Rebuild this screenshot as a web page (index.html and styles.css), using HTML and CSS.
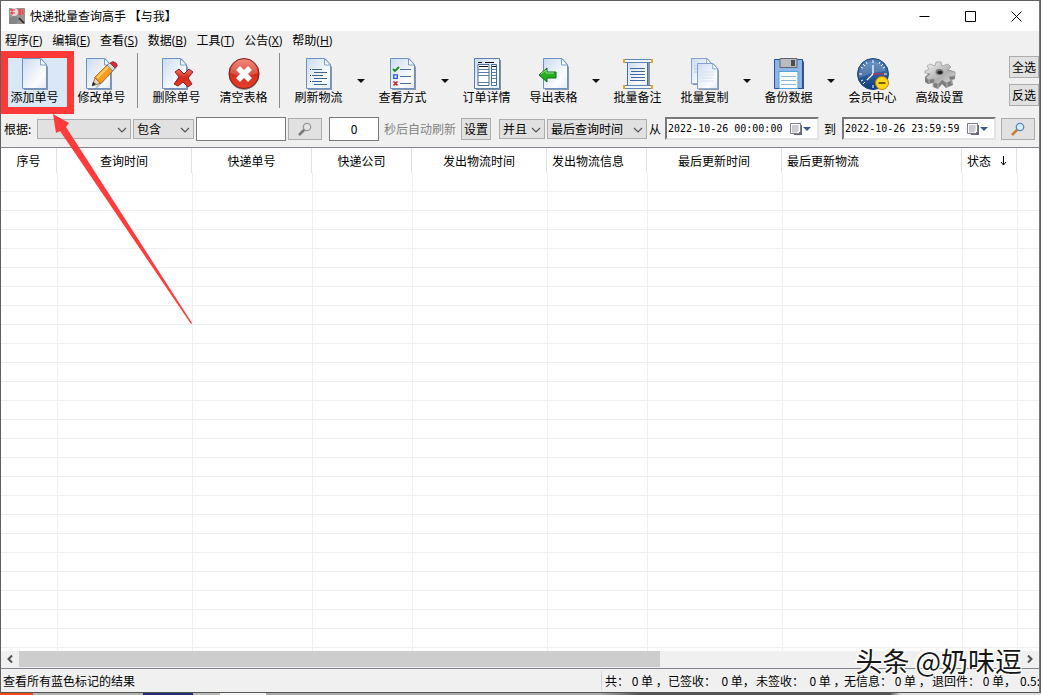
FILE: index.html
```html
<!DOCTYPE html>
<html lang="zh-CN">
<head>
<meta charset="utf-8">
<title>快递批量查询高手</title>
<link rel="stylesheet" href="styles.css">
</head>
<body>
<svg class="defs" aria-hidden="true">
  <defs>
    <linearGradient id="paper" x1="0" y1="0" x2="1" y2="1"><stop offset="0" stop-color="#cbdaf0"/><stop offset=".7" stop-color="#fbfdff"/><stop offset="1" stop-color="#e2eaf6"/></linearGradient>
    <linearGradient id="red" x1="0" y1="0" x2="0" y2="1"><stop offset="0" stop-color="#f0705a"/><stop offset=".5" stop-color="#d42a1c"/><stop offset="1" stop-color="#e8402c"/></linearGradient>
    <linearGradient id="blue" x1="0" y1="0" x2="0" y2="1"><stop offset="0" stop-color="#4f7fba"/><stop offset="1" stop-color="#0d3c7c"/></linearGradient>
    <linearGradient id="metal" x1="0" y1="0" x2="1" y2="1"><stop offset="0" stop-color="#f4f4f4"/><stop offset=".6" stop-color="#b0b0b0"/><stop offset="1" stop-color="#dcdcdc"/></linearGradient>
    <symbol id="page" viewBox="0 0 26 32"><path d="M3 2h17l6 7v23H2z" fill="#8b95a5"/><path d="M.5.5h18.500l5.500 6V30.500H.5z" fill="url(#paper)" stroke="#6d91c4"/><path d="M18.500.500v6.500h6z" fill="#f8fbff" stroke="#7e9cc8"/></symbol>
    <symbol id="chev" viewBox="0 0 10 6"><path d="M1 1l4 4 4-4" fill="none" stroke="#555" stroke-width="1.200"/></symbol>
    <symbol id="calendar" viewBox="0 0 22 12"><path d="M2 2h10v10H4z" fill="#667"/><path d="M.5.5h10v8l-2 2h-8z" fill="#fff" stroke="#7d7d88"/><path d="M2 3h7M2 5h7M2 7h7M2 9h5M3 2v7M5 2v7M7 2v7" stroke="#a6a6b4" stroke-width=".7"/><path d="M13 4h8l-4 4z" fill="#375985"/></symbol>
  </defs>
</svg>

<div class="window">
  <header class="titlebar">
    <svg class="app-icon" viewBox="0 0 16 16" aria-hidden="true"><path d="M0 0h16v16H0z" fill="#9a9292"/><circle cx="5" cy="4" r="4" fill="#e9dada"/><path d="M9 1h6v6H9z" fill="#d9b9b9"/><path d="M1 2h5M3 1v6M1 5h5M9 2h5M9 4h5M11 1v6M14 1v5M9 6h6" stroke="#e02a30"/><path d="M0 10l6-2 5 4-5 4H0z" fill="#858585"/><path d="M10 10l5 5" stroke="#222" stroke-width="1.500"/></svg>
    <h1 class="title">快递批量查询高手 【与我】</h1>
    <div class="window-buttons">
      <button class="win-btn" aria-label="最小化"><svg viewBox="0 0 11 11"><path d="M.5 5.500h10"/></svg></button>
      <button class="win-btn" aria-label="最大化"><svg viewBox="0 0 11 11"><path d="M.5.5h10v10H.5z"/></svg></button>
      <button class="win-btn" aria-label="关闭"><svg viewBox="0 0 11 11"><path d="M.5.5l10 10M10.500.5l-10 10"/></svg></button>
    </div>
  </header>

  <nav class="menu">
    <button>程序(<u>F</u>)</button><button>编辑(<u>E</u>)</button><button>查看(<u>S</u>)</button><button>数据(<u>B</u>)</button><button>工具(<u>T</u>)</button><button>公告(<u>X</u>)</button><button>帮助(<u>H</u>)</button>
  </nav>

  <div class="toolbar">
    <button class="tool tool-active"><svg viewBox="0 0 32 32"><use href="#page" x="3" width="26" height="32"/></svg>添加单号</button>
    <button class="tool"><svg viewBox="0 0 32 32"><use href="#page" width="26" height="32"/><path d="M10 30l16-17 4-4" stroke="#808790" stroke-width="2" opacity=".5"/><path d="M6 28l3-8 6 5z" fill="#f0d2a4" stroke="#74502c" stroke-width=".7"/><path d="M6 28l1-4 3 2z" fill="#222"/><path d="M8.500 19.500L21 7l6 5.500-12 13z" fill="#f59d25" stroke="#985415" stroke-width=".7"/><path d="M11 20L23 8" stroke="#ffd35b" stroke-width="2"/><path d="M21 7l3-2 5 5-2.500 3z" fill="#d5d8df" stroke="#686c78" stroke-width=".7"/><path d="M24 5q3-3 6 0 3 3-1 5z" fill="#d82a35" stroke="#8d2730" stroke-width=".7"/></svg>修改单号</button>
    <span class="divider"></span>
    <button class="tool"><svg viewBox="0 0 32 32"><use href="#page" x="1" width="26" height="32"/><path d="M14 14l4-3 5 5 5-5 4 3-5 6 4 6-4 3-5-5-5 4-4-2 5-7z" fill="url(#red)" stroke="#941a20" stroke-width="1"/></svg>删除单号</button>
    <button class="tool"><svg viewBox="0 0 32 32"><circle cx="16" cy="16.500" r="15.200" fill="#777"/><circle cx="16" cy="15.500" r="15" fill="url(#red)" stroke="#7e211d"/><path d="M2.500 15a13.500 13.500 0 0127 0q-14 6-27 0z" fill="#fff" opacity=".2"/><path d="M10 10l12 12M22 10L10 22" stroke="#fff" stroke-width="5.500"/></svg>清空表格</button>
    <span class="divider"></span>
    <button class="tool"><svg viewBox="0 0 32 32"><use href="#page" x="3" width="26" height="32"/><path d="M9 11.500h10M11 14.500h13M9 17.500h11M11 20.500h13M9 23.500h10M11 26.500h13" stroke="#3f6594"/><path d="M7 11.500h1M7 17.500h1M7 23.500h1" stroke="#222"/></svg>刷新物流</button>
    <button class="drop" aria-label="刷新物流选项"><svg viewBox="0 0 8 4"><path d="M0 0h8L4 4z"/></svg></button>
    <button class="tool"><svg viewBox="0 0 32 32"><use href="#page" x="3" width="26" height="32"/><path d="M13 11.500h11M13 18.500h11M13 25.500h11" stroke="#4c6f9e"/><path d="M6 11l2 2 4-4" fill="none" stroke="#148a1d" stroke-width="1.800"/><path d="M6.800 16.800h3.500v3.500H6.800z" fill="#fff" stroke="#1e52d9" stroke-width="1.300"/><path d="M6.500 23.500l4 4M10.500 23.500l-4 4" stroke="#dc2327" stroke-width="1.700"/></svg>查看方式</button>
    <button class="drop" aria-label="查看方式选项"><svg viewBox="0 0 8 4"><path d="M0 0h8L4 4z"/></svg></button>
    <button class="tool"><svg viewBox="0 0 32 32"><path d="M5 2h25v30H5z" fill="#858e99"/><path d="M3.500.500h25v30h-25z" fill="url(#paper)" stroke="#5d7fae"/><path d="M7 6.500h11v21H7zM20.500 6.500h5v21h-5z" fill="#fff" stroke="#496b9b"/><path d="M7 11.500h11M7 14.500h11M7 17.500h11M7 24.500h11M20 11.500h5M20 14.500h5M20 17.500h5M20 20.500h5M20 24.500h5" stroke="#5d7ca8"/><path d="M7 4.500h4M14 4.500h9M8 8.500h9M21 8.500h4" stroke="#111"/></svg>订单详情</button>
    <button class="tool"><svg viewBox="0 0 32 32"><use href="#page" x="5" width="26" height="32"/><path d="M1 17l8-7v4h9v6H9v4z" fill="#27ae25" stroke="#126a18"/><path d="M3 16l5-4v3h8" fill="none" stroke="#99de86"/></svg>导出表格</button>
    <button class="drop" aria-label="导出表格选项"><svg viewBox="0 0 8 4"><path d="M0 0h8L4 4z"/></svg></button>
    <button class="tool"><svg viewBox="0 0 32 32"><path d="M7 4h21v24H7z" fill="#8b95a5"/><path d="M5.500 3h20v26h-20z" fill="url(#paper)" stroke="#476da1"/><path d="M2.500 1.500h27v3h-27zM2.500 27.500h27v3h-27z" fill="#f1f6ff" stroke="#6385b5"/><path d="M1 1h2v4H1zM29 1h2v4h-2zM1 27h2v4H1zM29 27h2v4h-2z" fill="#e6a91e"/><path d="M8 10.500h15M9 13.500h14M8 16.500h15M9 19.500h14M8 22.500h15" stroke="#40699b"/></svg>批量备注</button>
    <button class="tool"><svg viewBox="0 0 32 32"><use href="#page" x="2" width="22" height="27"/><path d="M5 8h13M5 11h13M5 14h13" stroke="#b8c7dc"/><use href="#page" x="8" y="5" width="22" height="27"/><path d="M12 14h13M12 17h13M12 20h13M12 23h13" stroke="#d6e1f0"/></svg>批量复制</button>
    <button class="drop" aria-label="批量复制选项"><svg viewBox="0 0 8 4"><path d="M0 0h8L4 4z"/></svg></button>
    <button class="tool"><svg viewBox="0 0 32 32"><path d="M3 1h26l2 3v27H2z" fill="#3e5380"/><path d="M1.500 1.500h28v29h-28z" fill="#8fb6e8" stroke="#244fa2"/><path d="M7 .5h17v9H7z" fill="#bcbcbc" stroke="#5c6672"/><path d="M18 2h4v6h-4z" fill="#484d56"/><path d="M6 13.500h19v17H6z" fill="#f9fcff" stroke="#53a3d6"/><path d="M8 18.500h15M8 22.500h15M8 26.500h15" stroke="#8eb8d8"/></svg>备份数据</button>
    <button class="drop" aria-label="备份数据选项"><svg viewBox="0 0 8 4"><path d="M0 0h8L4 4z"/></svg></button>
    <button class="tool"><svg viewBox="0 0 32 32"><circle cx="16" cy="16" r="15.500" fill="url(#blue)" stroke="#1a447b"/><path d="M2 15a14 14 0 0127-2q-13 1-27 7z" fill="#fff" opacity=".18"/><path d="M16 2v3M16 27v3M2 16h3M27 16h3M6 6l2 2M24 8l2-2M6 26l2-2M3.800 9l2 1M28 9l-2 1M9 3.800l1 2M23 3.800l-1 2M4 23l2-1" stroke="#fff"/><path d="M16 16V7M16 16l-6 6" stroke="#fff" stroke-width="1.300"/><path d="M16 16h11" stroke="#e12d3b"/><circle cx="25" cy="25" r="6.500" fill="#ffd61b" stroke="#bd850c"/><path d="M21.500 25h7" stroke="#4b3500" stroke-width="1.500"/></svg>会员中心</button>
    <button class="tool"><svg viewBox="0 0 32 32"><path d="M1 13l4 2-4 4v5l3 2 5-1v4l5 2 4-5 4 4 7-3-1-5 3-1v-7l-8-3z" fill="#7c7c7c"/><path d="M9 24v5M14 26v5M23 24v5M5 20v5M28 21v5" stroke="#b9b9b9"/><path d="M1 13l4-2-2-3 3-2 5 2 1-4h5l1 4 6-2 3 3-3 3 7 2v4l-6 1 2 4-5 2-4-3-3 4-5-1v-4l-6 1-2-3 4-3-5-1z" fill="url(#metal)" stroke="#8c8c8c" stroke-width=".6"/><ellipse cx="15.500" cy="14" rx="4" ry="3" fill="#777"/><ellipse cx="16" cy="14.500" rx="2.500" ry="1.800" fill="#222"/></svg>高级设置</button>
    <div class="select-actions"><button class="push">全选</button><button class="push">反选</button></div>
  </div>

  <form class="filter" onsubmit="return false">
    <label class="caption" for="field">根据:</label>
    <span class="combo combo-field"><select id="field"><option></option></select><svg><use href="#chev"/></svg></span>
    <span class="combo combo-match"><select aria-label="匹配方式"><option>包含</option></select><svg><use href="#chev"/></svg></span>
    <input class="text keyword" type="text" aria-label="关键字">
    <button class="push search" aria-label="搜索"><svg viewBox="0 0 14 14"><path d="M1 13l6-6" stroke="#777" stroke-width="2.500"/><circle cx="9" cy="5" r="3.700" fill="#e5e5e5" stroke="#999" stroke-width="1.300"/></svg></button>
    <span class="refresh"><input class="text seconds" id="seconds" type="text" value="0"><label for="seconds">秒后自动刷新</label><button class="push">设置</button></span>
    <span class="combo combo-join"><select aria-label="逻辑"><option>并且</option></select><svg><use href="#chev"/></svg></span>
    <span class="combo combo-time"><select aria-label="时间字段"><option>最后查询时间</option></select><svg><use href="#chev"/></svg></span>
    <label for="from">从</label>
    <span class="date"><input id="from" type="text" value="2022-10-26 00:00:00"><button aria-label="选择开始日期"><svg><use href="#calendar"/></svg></button></span>
    <label class="to" for="to">到</label>
    <span class="date"><input id="to" type="text" value="2022-10-26 23:59:59"><button aria-label="选择结束日期"><svg><use href="#calendar"/></svg></button></span>
    <button class="push search" aria-label="按时间搜索"><svg viewBox="0 0 14 14"><path d="M1 13l6-6" stroke="#d27c2b" stroke-width="2.500"/><circle cx="9" cy="5" r="3.700" fill="#d3efff" stroke="#5687c8" stroke-width="1.300"/></svg></button>
  </form>

  <main class="grid">
    <table class="orders">
      <colgroup><col class="w-no"><col class="w-135"><col class="w-120"><col class="w-100"><col class="w-135"><col class="w-100"><col class="w-135"><col class="w-180"><col class="w-55"><col></colgroup>
      <thead><tr><th>序号</th><th>查询时间</th><th>快递单号</th><th>快递公司</th><th>发出物流时间</th><th class="left">发出物流信息</th><th>最后更新时间</th><th class="left">最后更新物流</th><th class="left">状态 <svg class="sort" viewBox="0 0 7 10" aria-label="降序"><path d="M3.500 0v9M1 6l2.500 3L6 6"/></svg></th><th></th></tr></thead>
      <tbody id="rows"></tbody>
    </table>
  </main>

  <div class="scrollbar">
    <button aria-label="向左滚动"><svg viewBox="0 0 6 8"><path d="M5 .5L1.500 4 5 7.500"/></svg></button>
    <div class="track"><div class="thumb"></div></div>
    <button aria-label="向右滚动"><svg viewBox="0 0 6 8"><path d="M1 .5L4.500 4 1 7.500"/></svg></button>
  </div>

  <footer class="status">
    <span class="hint">查看所有蓝色标记的结果</span>
    <span class="totals"><span>共： 0 单 ，</span><span>已签收：  0 单，</span><span>未签收：  0 单 ，</span><span>无信息： 0 单 ，</span><span>退回件： 0 单，</span><span>0.5:</span></span>
  </footer>
</div>

<div class="highlight"></div>
<svg class="pointer" viewBox="0 0 140 212" aria-hidden="true"><path d="M1 1l16 9-3 4 126 196-1 1L8 18l-4 2z"/></svg>
<div class="watermark">头条 @奶味逗</div>
<script src="rows.js"></script>
</body>
</html>
```
FILE: styles.css
```css
* { box-sizing: border-box; }

body {
  margin: 0;
  height: 100vh;
  padding: 1px 1px 2px;
  overflow: hidden;
  position: relative;
  background: linear-gradient(90deg, #f34a12 0 33px, #b1b4ae 33px 143px, #203070 143px 193px, #b8bbb6 193px 220px, #f4f5f3 220px 266px, #a8aaa8 266px 600px, #555 640px 890px, #ddd 900px) bottom / 100% 2px no-repeat, #606060;
  font: 12px/14px "Noto Sans CJK SC", sans-serif;
  color: #000;
}

button, input, select { font: inherit; color: inherit; margin: 0; padding: 0; border: 0; border-radius: 0; }
button { background: none; white-space: nowrap; }
svg { display: block; flex: none; }
.defs { position: absolute; width: 0; height: 0; }

.window {
  display: flex;
  flex-direction: column;
  height: 100%;
  background: #f0f0f0;
  border-right: 1px solid #777;
  border-bottom: 1px solid #555;
}

.titlebar { display: flex; align-items: center; flex: none; height: 30px; padding-left: 8px; background: #fff; }
.app-icon { width: 16px; height: 16px; }
.title { margin: 0 0 0 5px; font-size: 12px; font-weight: 400; }
.window-buttons { display: flex; margin-left: auto; }
.win-btn { display: grid; place-items: center; width: 46px; height: 29px; }
.win-btn svg { width: 11px; height: 11px; fill: none; stroke: #000; }

.menu { display: flex; align-items: center; gap: 10px; flex: none; height: 20px; padding-left: 4px; }
.menu button { font-family: "Open Sans", "Noto Sans CJK SC", sans-serif; }
.menu u { text-underline-offset: 1px; }

.toolbar { display: flex; flex: none; height: 60px; }
.tool { display: flex; flex-direction: column; align-items: center; flex: none; width: 67px; padding-top: 7px; }
.tool svg { width: 32px; height: 32px; }
.tool-active { background: #d9e8f4; }
.drop { display: grid; place-items: center; flex: none; width: 17px; }
.drop svg { width: 8px; height: 4px; fill: #111; }
.divider { flex: none; width: 6px; margin: 2px 0 3px 2px; border-left: 1px solid #8c8c8c; }
.select-actions { display: flex; flex-direction: column; gap: 6px; margin: 5px 0 0 auto; }
.push { display: grid; place-items: center; flex: none; width: 30px; height: 22px; background: #e1e1e1; border: 1px solid #adadad; }

.filter {
  display: flex;
  align-items: center;
  gap: 2px;
  flex: none;
  height: 37px;
  padding: 0 5px 1px 3px;
  border-bottom: 1px solid #84848c;
  white-space: nowrap;
}
.caption { flex: none; width: 31px; }
.combo { position: relative; flex: none; height: 20px; }
.combo select { appearance: none; width: 100%; height: 20px; padding-left: 3px; background: #e1e1e1; border: 1px solid #adadad; }
.combo svg { position: absolute; right: 4px; top: 8px; width: 10px; height: 6px; pointer-events: none; }
.combo-field { width: 94px; }
.combo-match { width: 61px; }
.combo-join { width: 46px; }
.combo-time { width: 100px; }
.text { flex: none; height: 24px; background: #fff; border: 1px solid #7a7a7a; }
.keyword { width: 90px; }
.search { width: 34px; }
.search svg { width: 14px; height: 14px; }
.refresh { display: flex; align-items: center; gap: 5px; margin: 0 6px 0 5px; color: #838383; }
.refresh .push, .refresh .text { color: #000; }
.seconds { width: 50px; text-align: center; }
.date {
  display: flex;
  align-items: center;
  flex: none;
  width: 154px;
  height: 23px;
  margin-left: 2px;
  background: #fff;
  border: 2px solid;
  border-color: #777 #e4e4e4 #e4e4e4 #777;
}
.date input { flex: 1; min-width: 0; height: 19px; padding-left: 1px; background: #fff; font: 10px/14px "DejaVu Sans Mono", monospace; }
.date button { padding-right: 5px; }
.date svg { width: 22px; height: 12px; }
.to { margin: 0 2px 0 3px; }
.filter .date + .search { margin-left: 3px; }

.grid { flex: 1; min-height: 0; overflow: hidden; background: #fff; }
.orders { width: 100%; table-layout: fixed; border-spacing: 0; }
.w-no { width: 56px; }
.w-55 { width: 55px; }
.w-100 { width: 100px; }
.w-120 { width: 120px; }
.w-135 { width: 135px; }
.w-180 { width: 180px; }
.orders th { height: 25px; padding: 0; border-right: 1px solid #e2e2e2; font-weight: 400; white-space: nowrap; }
.orders th.left { padding-left: 5px; text-align: left; }
.orders th:last-child { border-right: 0; }
.orders td { height: 19px; padding: 0; border-bottom: 1px solid #f0f0f0; border-left: 1px solid #f0f0f0; }
.orders td:first-child { border-left: 0; }
.sort { display: inline-block; width: 7px; height: 10px; margin-left: 6px; fill: none; stroke: #000; }

.scrollbar { display: flex; flex: none; height: 17px; padding-bottom: 1px; }
.scrollbar button { display: grid; place-items: center; width: 18px; }
.scrollbar svg { width: 6px; height: 8px; fill: none; stroke: #505050; stroke-width: 2; }
.track { flex: 1; }
.thumb { width: 64%; height: 16px; background: #cdcdcd; }

.status { display: flex; align-items: center; flex: none; height: 24px; border-top: 1px solid #84848c; overflow: hidden; white-space: pre; }
.hint { flex: 0 0 600px; padding-left: 2px; }
.totals { display: flex; flex: 1; min-width: 0; height: 19px; align-items: center; padding-left: 3px; overflow: hidden; border-left: 1px solid #d4d4d4; }
.totals span { flex: none; width: 88px; }
.totals span:first-child { width: 63px; }

.highlight { position: absolute; left: 1px; top: 51px; width: 73px; height: 63px; border: 7px solid #ff3838; pointer-events: none; }
.pointer { position: absolute; left: 52px; top: 113px; width: 140px; height: 212px; fill: #ff3b3b; pointer-events: none; }
.watermark {
  position: absolute;
  right: 19px;
  bottom: 18px;
  font-size: 27px;
  line-height: 32px;
  color: #161616;
  text-shadow: -1px -1px 0 #fff, 1px -1px 0 #fff, -1px 1px 0 #fff, 1px 1px 0 #fff, -2px -1px 1px #fff;
  pointer-events: none;
}
```
FILE: rows.js
```js
const body = document.getElementById("rows");
for (let i = 0; i < 26; i++) {
  const row = body.insertRow();
  for (let c = 0; c < 10; c++) row.insertCell();
}
```
